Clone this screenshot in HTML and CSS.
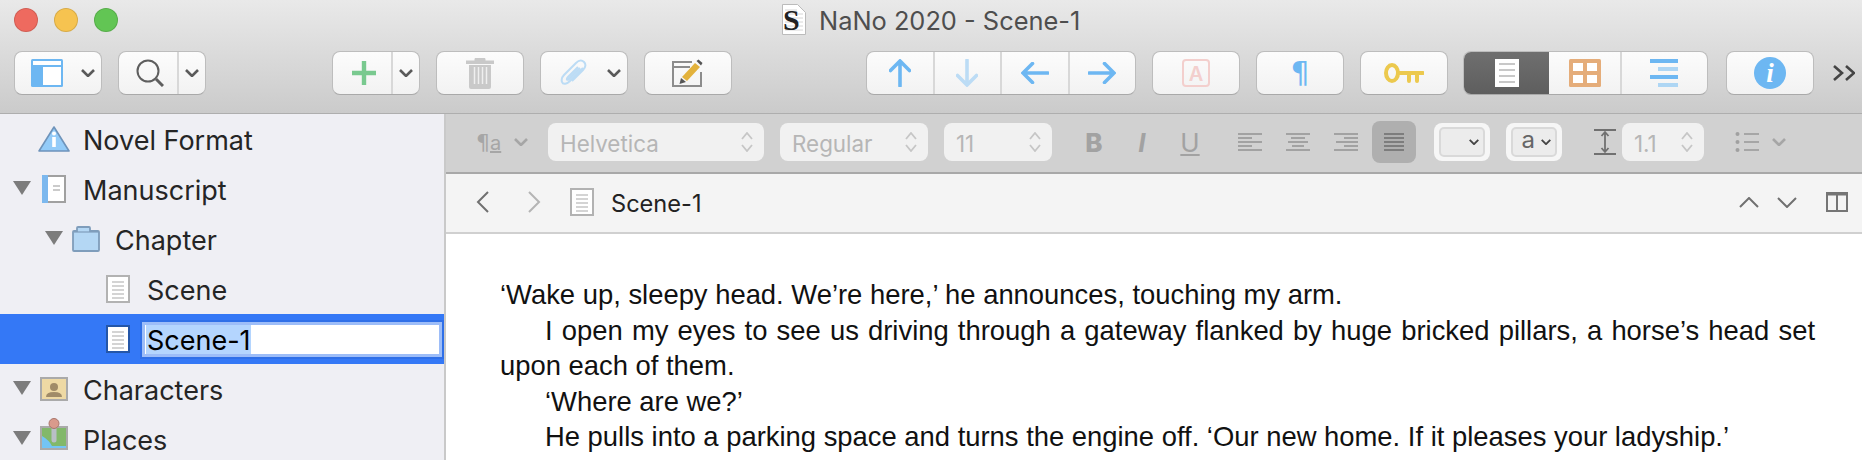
FILE: index.html
```html
<!DOCTYPE html>
<html lang="en">
<head>
    <meta charset="UTF-8">
    <meta name="viewport" content="width=device-width, initial-scale=1.0">
    <title>NaNo 2020 - Scene-1</title>
    <link rel="stylesheet" href="styles.css">
</head>
<body>
<svg class="defs" width="0" height="0">
    <symbol id="chev" viewBox="0 0 14 8"><path d="M1 1l6 6 6-6" fill="none" stroke="currentColor" stroke-width="2.6"/></symbol>
    <symbol id="updown" viewBox="0 0 12 20"><path d="M1 7l5-6 5 6M1 13l5 6 5-6" fill="none" stroke="currentColor" stroke-width="1.8"/></symbol>
    <symbol id="tri" viewBox="0 0 18 14"><path d="M0 0h18l-9 14z" fill="currentColor"/></symbol>
    <symbol id="doc" viewBox="0 0 24 28">
        <rect x="1" y="1" width="22" height="26" fill="#fff" stroke="#b2b2b2" stroke-width="2"/>
        <path d="M6 7h12M6 11h12M6 15h12M6 19h12M6 23h12" stroke="#c6c6c6" stroke-width="1.6"/>
    </symbol>
</svg>

<div class="chrome">
    <div class="titlebar">
        <div class="lights">
            <span class="light red"></span>
            <span class="light yellow"></span>
            <span class="light green"></span>
        </div>
        <svg class="title-icon" width="24" height="31" viewBox="0 0 24 31">
            <path d="M.5.5h15l8 8v22H.5z" fill="#fff" stroke="#bbb"/>
            <path d="M3 6h12M3 10h18M3 14h18M3 18h18M3 22h18M3 26h18" stroke="#d6d6d6"/>
            <text x="1" y="26" class="title-s">S</text>
        </svg>
        <span class="title-text">NaNo 2020 - Scene-1</span>
    </div>
    <div class="toolbar">
        <div class="btn">
            <div class="btn-main">
                <svg width="32" height="28" viewBox="0 0 32 28"><rect width="32" height="28" rx="1.5" fill="#6db7f2"/><rect x="2" y="2" width="28" height="4" fill="#fff"/><rect x="12" y="8" width="18" height="18" fill="#fff"/></svg>
            </div>
            <div class="btn-drop"><svg class="chev" width="14" height="8"><use href="#chev"/></svg></div>
        </div>
        <div class="btn">
            <div class="btn-main split">
                <svg width="28" height="28" viewBox="0 0 28 28"><circle cx="12" cy="12" r="10.5" fill="none" stroke="#5e5e5e" stroke-width="2"/><path d="M20 20l7 7" stroke="#5e5e5e" stroke-width="3"/></svg>
            </div>
            <div class="btn-drop"><svg class="chev" width="14" height="8"><use href="#chev"/></svg></div>
        </div>
        <div class="btn gap-add">
            <div class="btn-main split">
                <svg width="24" height="24" viewBox="0 0 24 24"><path d="M12 0v24M0 12h24" stroke="#79c98f" stroke-width="4.4"/></svg>
            </div>
            <div class="btn-drop"><svg class="chev" width="14" height="8"><use href="#chev"/></svg></div>
        </div>
        <div class="btn btn-center">
            <svg width="28" height="32" viewBox="0 0 28 32"><path d="M0 4h28v2.500H0zM9 4V1.500h10V4" fill="#c9c9c9" stroke="#c9c9c9"/><path d="M3 8h22v22q0 2-2 2H5q-2 0-2-2z" fill="#c9c9c9"/><path d="M8.500 10v17M12.500 10v17M16.500 10v17M20.500 10v17" stroke="#efefef" stroke-width="1.500"/></svg>
        </div>
        <div class="btn">
            <div class="btn-main">
                <svg width="27" height="28" viewBox="0 0 27 28"><path d="M23 9L10 22c-3 3-7 4-8 1s0-5 2-7L16 4c3-3 6-3 8-1s2 5-1 8L12 22M18 8L8 18c-2 2-1 4 1 2L20 9" fill="none" stroke="#bcdcf5" stroke-width="2"/></svg>
            </div>
            <div class="btn-drop"><svg class="chev" width="14" height="8"><use href="#chev"/></svg></div>
        </div>
        <div class="btn btn-center">
            <svg width="32" height="28" viewBox="0 0 32 28"><path d="M20 3H1v24h28V13" fill="none" stroke="#8c8c8c" stroke-width="2"/><path d="M1 8h17" stroke="#8c8c8c" stroke-width="2"/><path d="M10 18L23 4l5 4-13 14z" fill="#e3b23c"/><path d="M9 19l-1.500 6 6.500-2z" fill="#555"/><path d="M24.500 2l2-1.500 4 3.500-1.500 2.500z" fill="#555"/></svg>
        </div>
        <div class="btn seg gap-arrows">
            <div class="seg-item"><svg width="22" height="28" viewBox="0 0 22 28"><path d="M11 27V2M1.500 11.500L11 2l9.500 9.500" fill="none" stroke="#6db7f2" stroke-width="3.600" stroke-linecap="round"/></svg></div>
            <div class="seg-item"><svg width="22" height="28" viewBox="0 0 22 28"><path d="M11 1v25M1.500 16.500L11 26l9.500-9.500" fill="none" stroke="#bcdcf5" stroke-width="3.600" stroke-linecap="round"/></svg></div>
            <div class="seg-item"><svg width="28" height="22" viewBox="0 0 28 22"><path d="M27 11H2M11.500 1.500L2 11l9.500 9.500" fill="none" stroke="#6db7f2" stroke-width="3.600" stroke-linecap="round"/></svg></div>
            <div class="seg-item"><svg width="28" height="22" viewBox="0 0 28 22"><path d="M1 11h25M16.500 1.500L26 11l-9.500 9.500" fill="none" stroke="#6db7f2" stroke-width="3.600" stroke-linecap="round"/></svg></div>
        </div>
        <div class="btn btn-center">
            <svg width="28" height="28" viewBox="0 0 28 28"><rect x="1" y="1" width="26" height="26" rx="3" fill="none" stroke="#f3cfcd" stroke-width="2"/><text x="14" y="22" class="a-mark">A</text></svg>
        </div>
        <div class="btn btn-center"><span class="pilcrow">¶</span></div>
        <div class="btn btn-center">
            <svg width="40" height="20" viewBox="0 0 40 20"><ellipse cx="8" cy="10" rx="6" ry="8" fill="none" stroke="#ecc94e" stroke-width="4"/><path d="M14 10h25M25 10v8M33 10v8" stroke="#ecc94e" stroke-width="4" stroke-linecap="round"/></svg>
        </div>
        <div class="btn seg views gap-views">
            <div class="view-item view-on">
                <svg width="24" height="28" viewBox="0 0 24 28"><rect width="24" height="28" fill="#fff"/><path d="M4 5h16M4 11h16M4 17h16M4 23h16" stroke="#c8c8c8" stroke-width="2"/></svg>
            </div>
            <div class="view-item view-cork">
                <svg width="32" height="28" viewBox="0 0 32 28"><rect width="32" height="28" rx="1.500" fill="#e5ad7a"/><path d="M4 4h10v8H4zM18 4h10v8H18zM4 16h10v8H4zM18 16h10v8H18z" fill="#fff"/></svg>
            </div>
            <div class="view-item">
                <svg width="28" height="28" viewBox="0 0 28 28"><path d="M0 0h28v4H0zM0 16h28v4H0z" fill="#6db7f2"/><path d="M8 8h20v4H8zM8 24h20v4H8z" fill="#aed6f4"/></svg>
            </div>
        </div>
        <div class="btn btn-center gap-info">
            <svg width="32" height="32" viewBox="0 0 32 32"><circle cx="16" cy="16" r="16" fill="#6db7f2"/><text x="16" y="25" class="i-mark">i</text></svg>
        </div>
        <svg class="more" width="22" height="16" viewBox="0 0 22 16"><path d="M1 1l8 7-8 7M13 1l8 7-8 7" fill="none" stroke="#444" stroke-width="2.600"/></svg>
    </div>
</div>

<div class="body-row">
    <div class="sidebar">
        <div class="row lv0">
            <span class="tri"></span>
            <span class="ico"><svg width="32" height="26" viewBox="0 0 32 26"><path d="M16 1L31 25H1z" fill="#93cbf8" stroke="#6e93ba" stroke-width="1.600" stroke-linejoin="round"/><rect x="14.200" y="11" width="3.600" height="10" fill="#fff"/><circle cx="16" cy="7.500" r="2" fill="#fff"/></svg></span>
            <span class="label">Novel Format</span>
        </div>
        <div class="row lv0">
            <span class="tri"><svg width="18" height="14"><use href="#tri"/></svg></span>
            <span class="ico"><svg width="24" height="28" viewBox="0 0 24 28"><rect x="1" y="1" width="22" height="26" fill="#fff" stroke="#a0a0a0" stroke-width="2"/><rect x="0" y="0" width="6" height="28" fill="#7cb8ee"/><path d="M11 11h7M11 15h7" stroke="#bbb" stroke-width="1.500"/></svg></span>
            <span class="label">Manuscript</span>
        </div>
        <div class="row lv1">
            <span class="tri"><svg width="18" height="14"><use href="#tri"/></svg></span>
            <span class="ico"><svg width="28" height="26" viewBox="0 0 28 26"><path d="M1 24V6q0-1 1-1h3V2q0-1 1-1h11q1 0 1 1v3h8q1 0 1 1v18q0 1-1 1H2q-1 0-1-1z" fill="#b4d7f4" stroke="#7f9dbb" stroke-width="1.800"/><path d="M2 6h25" stroke="#7f9dbb" stroke-width="1.200"/></svg></span>
            <span class="label">Chapter</span>
        </div>
        <div class="row lv2">
            <span class="tri"></span>
            <span class="ico"><svg width="24" height="28"><use href="#doc"/></svg></span>
            <span class="label">Scene</span>
        </div>
        <div class="row lv2 row-sel">
            <span class="tri"></span>
            <span class="ico"><svg width="24" height="28" viewBox="0 0 24 28"><rect x="1" y="1" width="22" height="26" fill="#fff" stroke="#2456a8" stroke-width="2"/><path d="M6 7h12M6 11h12M6 15h12M6 19h12M6 23h12" stroke="#c6c6c6" stroke-width="1.600"/></svg></span>
            <div class="rename"><span class="rename-sel">Scene-1</span></div>
        </div>
        <div class="row lv0">
            <span class="tri"><svg width="18" height="14"><use href="#tri"/></svg></span>
            <span class="ico"><svg width="28" height="24" viewBox="0 0 28 24"><rect x="1" y="1" width="26" height="22" fill="#eed9a4" stroke="#aaa" stroke-width="2"/><circle cx="14" cy="10" r="4" fill="#a08b68"/><path d="M6 20q0-5 8-5t8 5z" fill="#a08b68"/></svg></span>
            <span class="label">Characters</span>
        </div>
        <div class="row lv0">
            <span class="tri"><svg width="18" height="14"><use href="#tri"/></svg></span>
            <span class="ico ico-places"><svg width="28" height="32" viewBox="0 0 28 32"><rect x="1" y="9" width="26" height="22" fill="#82b86a" stroke="#aaa" stroke-width="2"/><path d="M2 18q7 4 10 10h14v2H2z" fill="#74c4f5"/><path d="M14 10v12" stroke="#b9bfc6" stroke-width="5" stroke-linecap="round"/><circle cx="14" cy="5.500" r="5" fill="#d99a8c" stroke="#a9766b"/></svg></span>
            <span class="label">Places</span>
        </div>
    </div>

    <div class="main">
        <div class="format-bar">
            <span class="para-style"><span class="para-mark">¶</span><span class="para-a">a</span></span>
            <svg class="chev chev-off" width="14" height="8"><use href="#chev"/></svg>
            <div class="field field-font"><span>Helvetica</span><svg class="updown" width="12" height="20"><use href="#updown"/></svg></div>
            <div class="field field-type"><span>Regular</span><svg class="updown" width="12" height="20"><use href="#updown"/></svg></div>
            <div class="field field-size"><span>11</span><svg class="updown" width="12" height="20"><use href="#updown"/></svg></div>
            <div class="fmt fmt-first"><b class="fmt-b">B</b></div>
            <div class="fmt"><i class="fmt-i">I</i></div>
            <div class="fmt"><u class="fmt-u">U</u></div>
            <div class="fmt fmt-group"><svg width="24" height="18" viewBox="0 0 24 18"><path d="M0 1h24M0 5h14M0 9h24M0 13h14M0 17h24" stroke="#a2a2a2" stroke-width="2"/></svg></div>
            <div class="fmt"><svg width="24" height="18" viewBox="0 0 24 18"><path d="M0 1h24M5 5h14M2 9h20M6 13h12M0 17h24" stroke="#a2a2a2" stroke-width="2"/></svg></div>
            <div class="fmt"><svg width="24" height="18" viewBox="0 0 24 18"><path d="M0 1h24M10 5h14M2 9h22M10 13h14M0 17h24" stroke="#a2a2a2" stroke-width="2"/></svg></div>
            <div class="fmt fmt-on"><svg width="20" height="18" viewBox="0 0 20 18"><path d="M0 1h20M0 5h20M0 9h20M0 13h20M0 17h20" stroke="#7d7d7d" stroke-width="2"/></svg></div>
            <div class="well well-first"><div class="well-inner"><svg class="chev-sm" width="10" height="6"><use href="#chev"/></svg></div></div>
            <div class="well"><div class="well-inner"><span class="well-a">a</span><svg class="chev-sm" width="10" height="6"><use href="#chev"/></svg></div></div>
            <svg class="line-ico" width="22" height="26" viewBox="0 0 22 26"><path d="M0 1h22M0 25h22" stroke="#707070" stroke-width="2"/><path d="M11 3v20M7.500 7L11 3l3.500 4M7.500 19L11 23l3.500-4" fill="none" stroke="#707070" stroke-width="1.800"/></svg>
            <div class="field field-line"><span>1.1</span><svg class="updown" width="12" height="20"><use href="#updown"/></svg></div>
            <svg class="list-ico" width="24" height="20" viewBox="0 0 24 20"><path d="M9 2h15M9 10h15M9 18h15" stroke="#a6a6a6" stroke-width="2"/><circle cx="2.500" cy="2" r="2" fill="#a0a0a0"/><circle cx="2.500" cy="10" r="2" fill="#a0a0a0"/><circle cx="2.500" cy="18" r="2" fill="#a0a0a0"/></svg>
            <svg class="chev chev-off chev-list" width="14" height="8"><use href="#chev"/></svg>
        </div>

        <div class="doc-header">
            <svg class="nav-back" width="13" height="22" viewBox="0 0 13 22"><path d="M12 1L2 11l10 10" fill="none" stroke="#707070" stroke-width="2"/></svg>
            <svg class="nav-fwd" width="13" height="22" viewBox="0 0 13 22"><path d="M1 1l10 10L1 21" fill="none" stroke="#b4b4b4" stroke-width="2"/></svg>
            <svg class="doc-ico" width="24" height="28"><use href="#doc"/></svg>
            <span class="doc-name">Scene-1</span>
            <svg class="hdr-up" width="20" height="11" viewBox="0 0 20 11"><path d="M1 10l9-9 9 9" fill="none" stroke="#707070" stroke-width="2"/></svg>
            <svg class="hdr-down" width="20" height="11" viewBox="0 0 20 11"><path d="M1 1l9 9 9-9" fill="none" stroke="#707070" stroke-width="2"/></svg>
            <svg class="hdr-split" width="22" height="20" viewBox="0 0 22 20"><rect x="1" y="1" width="20" height="18" fill="none" stroke="#757575" stroke-width="2"/><path d="M0 2h22" stroke="#757575" stroke-width="3"/><path d="M11 2v17" stroke="#757575" stroke-width="2"/></svg>
        </div>

        <div class="editor">
            <p class="first">‘Wake up, sleepy head. We’re here,’ he announces, touching my arm.</p>
            <p>I open my eyes to see us driving through a gateway flanked by huge bricked pillars, a horse’s head set upon each of them.</p>
            <p>‘Where are we?’</p>
            <p>He pulls into a parking space and turns the engine off. ‘Our new home. If it pleases your ladyship.’</p>
        </div>
    </div>
</div>
</body>
</html>
```

FILE: styles.css
```css
*{
    box-sizing: border-box;
}
html, body{
    margin: 0;
    padding: 0;
    height: 460px;
    overflow: hidden;
}
body{
    font-family: "Inter", "Liberation Sans", sans-serif;
    background-color: #fff;
    color: #222;
}
svg{
    display: block;
    flex: none;
}
.defs{
    position: absolute;
}

/* title + toolbar */
.chrome{
    height: 114px;
    background: linear-gradient(#e9e9e9, #cbcbcb);
    border-bottom: 1px solid #aeaeae;
}
.titlebar{
    height: 51px;
    display: flex;
    align-items: flex-start;
    padding: 8px 0 0 14px;
}
.lights{
    display: flex;
    gap: 16px;
    width: 104px;
}
.light{
    width: 24px;
    height: 24px;
    border-radius: 50%;
    border: 1px solid rgba(0,0,0,.12);
}
.red{ background-color: #ee6a5f; }
.yellow{ background-color: #f6c350; }
.green{ background-color: #62c554; }
.title-icon{
    margin: -4px 0 0 664px;
}
.title-s{
    font-family: "Liberation Serif", serif;
    font-weight: bold;
    font-size: 30px;
    fill: #222;
}
.title-text{
    margin-left: 13px;
    font-size: 25.4px;
    line-height: 26px;
    color: #4e4e4e;
}
.toolbar{
    display: flex;
    align-items: center;
    padding-left: 14px;
    gap: 16px;
    height: 44px;
}
.btn{
    width: 88px;
    height: 44px;
    display: flex;
    background: linear-gradient(#fcfcfc, #f2f2f2);
    border: 1px solid #bdbdbd;
    border-bottom-color: #a9a9a9;
    border-radius: 8px;
}
.btn-center{
    align-items: center;
    justify-content: center;
}
.btn-main{
    width: 60px;
    padding-left: 4px;
    display: flex;
    align-items: center;
    justify-content: center;
}
.split{
    border-right: 2px solid #d8d8d8;
}
.btn-drop{
    width: 25px;
    display: flex;
    align-items: center;
    justify-content: center;
}
.chev{
    color: #5a5a5a;
}
.gap-add{ margin-left: 110px; }
.gap-arrows{ margin-left: 118px; }
.gap-views{ margin-left: -1px; }
.gap-info{ margin-left: 2px; }
.seg{
    width: 270px;
}
.seg-item{
    flex: 1;
    display: flex;
    align-items: center;
    justify-content: center;
    border-left: 2px solid #d8d8d8;
}
.seg-item:first-child{
    border-left: none;
}
.a-mark{
    font-size: 20px;
    font-family: "Inter", sans-serif;
    font-weight: 600;
    text-anchor: middle;
    fill: #f3cfcd;
}
.pilcrow{
    font-family: "DejaVu Sans", sans-serif;
    font-size: 30px;
    line-height: 32px;
    color: #6db7f2;
}
.views{
    width: 245px;
    overflow: hidden;
}
.view-item{
    display: flex;
    align-items: center;
    justify-content: center;
    width: 86px;
}
.view-on{
    background: linear-gradient(#6f6f6f, #5e5e5e);
}
.view-cork{
    width: 73px;
    border-right: 2px solid #d8d8d8;
}
.i-mark{
    font-family: "Liberation Serif", serif;
    font-style: italic;
    font-weight: bold;
    font-size: 27px;
    text-anchor: middle;
    fill: #fff;
}
.more{
    margin-left: 3px;
}

/* layout below toolbar */
.body-row{
    display: flex;
    height: 346px;
}
.sidebar{
    width: 446px;
    flex: none;
    background-color: #efeff4;
    border-right: 2px solid #c9c9c9;
    font-size: 27px;
    color: #252525;
}
.row{
    height: 50px;
    display: flex;
    align-items: center;
}
.lv0{ padding-left: 13px; }
.lv1{ padding-left: 45px; }
.lv2{ padding-left: 77px; }
.tri{
    width: 18px;
    margin-right: 7px;
    color: #7c7c7c;
    flex: none;
    padding-bottom: 3px;
}
.ico{
    width: 32px;
    margin-right: 13px;
    flex: none;
    display: flex;
    justify-content: center;
}
.ico-places{
    margin-top: -10px;
}
.label{
    padding-top: 2px;
}
.row-sel{
    background-color: #3478f6;
    width: 444px;
}
.rename{
    flex: 1;
    height: 35px;
    margin: 0 2px 0 -5px;
    padding-left: 1px;
    background-color: #fff;
    border: 3px solid #9dbdf8;
    color: #000;
    display: flex;
    align-items: center;
    box-shadow: 0 0 0 2px #2f6fe8;
}
.rename-sel{
    background-color: #b4d5fe;
    padding: 2px 0 0 1px;
    line-height: 27px;
}

.main{
    flex: 1;
    min-width: 0;
}

/* format bar */
.format-bar{
    height: 60px;
    display: flex;
    align-items: center;
    padding: 0 0 2px 30px;
    background-color: #d1d1d1;
    border-bottom: 2px solid #a8a8a8;
}
.para-style{
    width: 26px;
    display: flex;
    align-items: baseline;
    color: #a6a6a6;
    font-size: 20px;
}
.para-mark{
    font-family: "DejaVu Sans", sans-serif;
    font-size: 22px;
}
.para-a{
    text-decoration: underline;
}
.chev-off{
    color: #a6a6a6;
    margin-left: 12px;
}
.field{
    height: 38px;
    display: flex;
    align-items: center;
    justify-content: space-between;
    padding: 0 11px 0 12px;
    background-color: #f1f1f1;
    border-radius: 8px;
    font-size: 22.4px;
    color: #b6b6b6;
}
.field span{
    padding-top: 2px;
}
.updown{
    color: #c6c6c6;
}
.field-font{ width: 216px; margin-left: 20px; }
.field-type{ width: 148px; margin-left: 16px; }
.field-size{ width: 108px; margin-left: 16px; }
.field-line{ width: 82px; margin-left: 6px; }
.fmt{
    width: 44px;
    height: 42px;
    margin-left: 4px;
    display: flex;
    align-items: center;
    justify-content: center;
    font-size: 26px;
    color: #a2a2a2;
}
.fmt-first{ margin-left: 20px; }
.fmt-group{ margin-left: 16px; }
.fmt-on{
    background-color: #afafaf;
    border-radius: 8px;
}
.fmt-b{ font-weight: 800; }
.fmt-i{ font-weight: 700; }
.well{
    width: 56px;
    height: 38px;
    margin-left: 16px;
    padding: 4px 5px;
    background-color: #f6f6f6;
    border-radius: 8px;
}
.well-first{ margin-left: 18px; }
.well-inner{
    height: 100%;
    display: flex;
    align-items: center;
    justify-content: flex-end;
    padding-right: 4px;
    background-color: #ececec;
    border: 2px solid #d9d9d9;
    border-radius: 5px;
}
.chev-sm{
    color: #444;
}
.well-a{
    margin-right: 6px;
    font-size: 24px;
    line-height: 24px;
    color: #666;
    padding-bottom: 4px;
}
.line-ico{ margin-left: 32px; }
.list-ico{ margin-left: 31px; }
.chev-list{ margin-left: 13px; }

/* header above the editor */
.doc-header{
    height: 60px;
    display: flex;
    align-items: center;
    padding: 0 14px 2px 30px;
    background-color: #f4f4f4;
    border-bottom: 2px solid #d0d0d0;
}
.nav-fwd{ margin-left: 39px; }
.doc-ico{ margin-left: 29px; }
.doc-name{
    margin-left: 17px;
    padding-top: 2px;
    font-size: 23.6px;
    color: #222;
}
.hdr-up{ margin-left: auto; }
.hdr-down{ margin-left: 18px; }
.hdr-split{ margin-left: 29px; }

/* text */
.editor{
    padding: 43px 47px 0 54px;
    font-family: "Liberation Sans", Arial, sans-serif;
    font-size: 27.4px;
    line-height: 35.5px;
    color: #111;
    text-align: justify;
}
.editor p{
    margin: 0;
    text-indent: 45px;
}
.editor .first{
    text-indent: 0;
}
```
